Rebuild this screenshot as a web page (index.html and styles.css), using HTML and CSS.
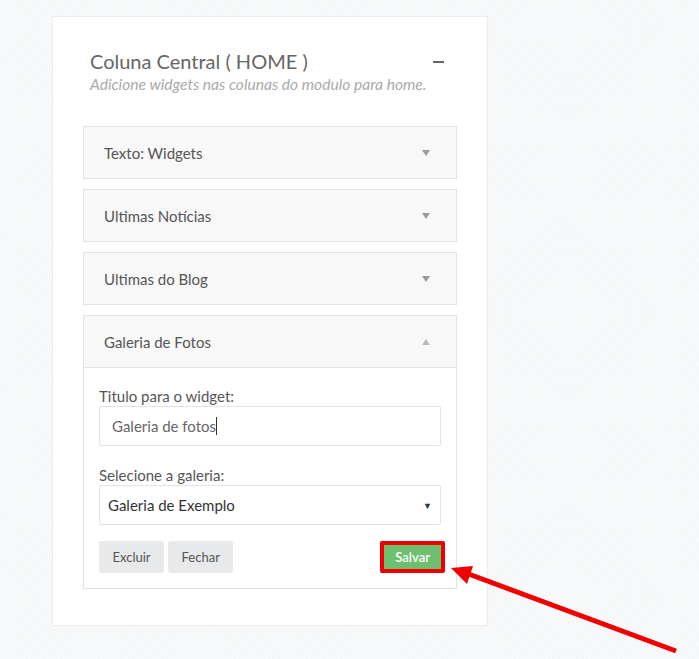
FILE: index.html
```html
<!DOCTYPE html>
<html lang="pt-BR">
<head>
    <meta charset="UTF-8">
    <meta name="viewport" content="width=device-width, initial-scale=1.0">
    <link rel="stylesheet" href="styles.css">
    <title>Coluna Central</title>
</head>
<body>
    <div class="card">
        <div class="card-head">
            <div>
                <h2>Coluna Central ( HOME )</h2>
                <p class="hint">Adicione widgets nas colunas do modulo para home.</p>
            </div>
            <span class="minus"></span>
        </div>

        <div class="widget">
            <div class="widget-head">Texto: Widgets <span class="caret"></span></div>
        </div>
        <div class="widget">
            <div class="widget-head">Ultimas Notícias <span class="caret"></span></div>
        </div>
        <div class="widget">
            <div class="widget-head">Ultimas do Blog <span class="caret"></span></div>
        </div>
        <div class="widget">
            <div class="widget-head">Galeria de Fotos <span class="caret up"></span></div>
            <div class="widget-body">
                <label for="titulo">Titulo para o widget:</label>
                <div class="field">Galeria de fotos<span class="cursor"></span></div>

                <label for="galeria" class="second">Selecione a galeria:</label>
                <div class="field select">Galeria de Exemplo <span class="select-arrow">▼</span></div>

                <div class="actions">
                    <button class="btn">Excluir</button>
                    <button class="btn">Fechar</button>
                    <button class="btn save">Salvar</button>
                </div>
            </div>
        </div>
    </div>

    <svg class="pointer" width="699" height="659" viewBox="0 0 699 659">
        <line x1="676" y1="651" x2="466" y2="573" stroke="#f20000" stroke-width="5"/>
        <polygon points="451,568 473,566 467,584" fill="#f20000"/>
    </svg>
</body>
</html>
```

FILE: styles.css
```css
body {
    margin: 0;
    font-family: Lato, 'Open Sans', sans-serif;
    background-color: #f5f6f8;
    background-image:
        repeating-linear-gradient(45deg, rgba(255,255,255,0.35) 0 1px, transparent 1px 3px),
        repeating-linear-gradient(-45deg, rgba(255,255,255,0.35) 0 1px, transparent 1px 3px);
    height: 659px;
    overflow: hidden;
}

.card {
    margin: 16px 0 0 52px;
    width: 374px;
    height: 548px;
    padding: 30px;
    background-color: #fff;
    border: 1px solid #ececec;
}

.card-head {
    display: flex;
    justify-content: space-between;
    align-items: flex-start;
    padding: 1px 13px 0 7px;
    margin-bottom: 32px;
}

h2 {
    margin: 0;
    font-size: 20px;
    font-weight: 400;
    line-height: 26px;
    color: #666;
}

.hint {
    margin: 0;
    font-size: 15.6px;
    font-style: italic;
    line-height: 20px;
    color: #aaa;
}

.minus {
    display: block;
    width: 11px;
    height: 2px;
    margin-top: 13px;
    background-color: #666;
}

.widget {
    border: 1px solid #e3e3e3;
    margin-bottom: 10px;
}

.widget-head {
    display: flex;
    justify-content: space-between;
    align-items: center;
    height: 51px;
    padding: 0 26px 0 20px;
    background-color: #f8f8f8;
    font-size: 15px;
    color: #555;
}

.widget-body {
    border-top: 1px solid #e3e3e3;
    padding: 18px 15px 15px;
}

.caret {
    width: 0;
    height: 0;
    border-left: 4px solid transparent;
    border-right: 4px solid transparent;
    border-top: 6px solid #999;
}

.caret.up {
    border-top: none;
    border-bottom: 6px solid #bbb;
}

label {
    display: block;
    font-size: 15px;
    line-height: 20px;
    color: #555;
}

label.second {
    margin-top: 19px;
}

.field {
    display: flex;
    align-items: center;
    height: 38px;
    padding: 0 12px;
    border: 1px solid #e3e3e3;
    border-radius: 2px;
    font-size: 15px;
    color: #666;
}

.cursor {
    display: inline-block;
    width: 1px;
    height: 18px;
    background-color: #333;
}

.field.select {
    justify-content: space-between;
    padding: 0 8px;
    color: #333;
}

.select-arrow {
    font-size: 9px;
    color: #333;
}

.actions {
    display: flex;
    gap: 4px;
    margin-top: 16px;
}

.btn {
    height: 32px;
    padding: 0 13.5px;
    border: none;
    border-radius: 3px;
    background-color: #e8e9ea;
    font-family: inherit;
    font-size: 13px;
    color: #555;
}

.btn.save {
    margin-left: auto;
    margin-right: -4px;
    margin-top: 0;
    padding: 0 11px;
    border: 4px solid #f20000;
    border-radius: 2px;
    background-color: #6cc070;
    color: #fff;
    font-weight: 600;
}

.pointer {
    position: absolute;
    top: 0;
    left: 0;
}
```
